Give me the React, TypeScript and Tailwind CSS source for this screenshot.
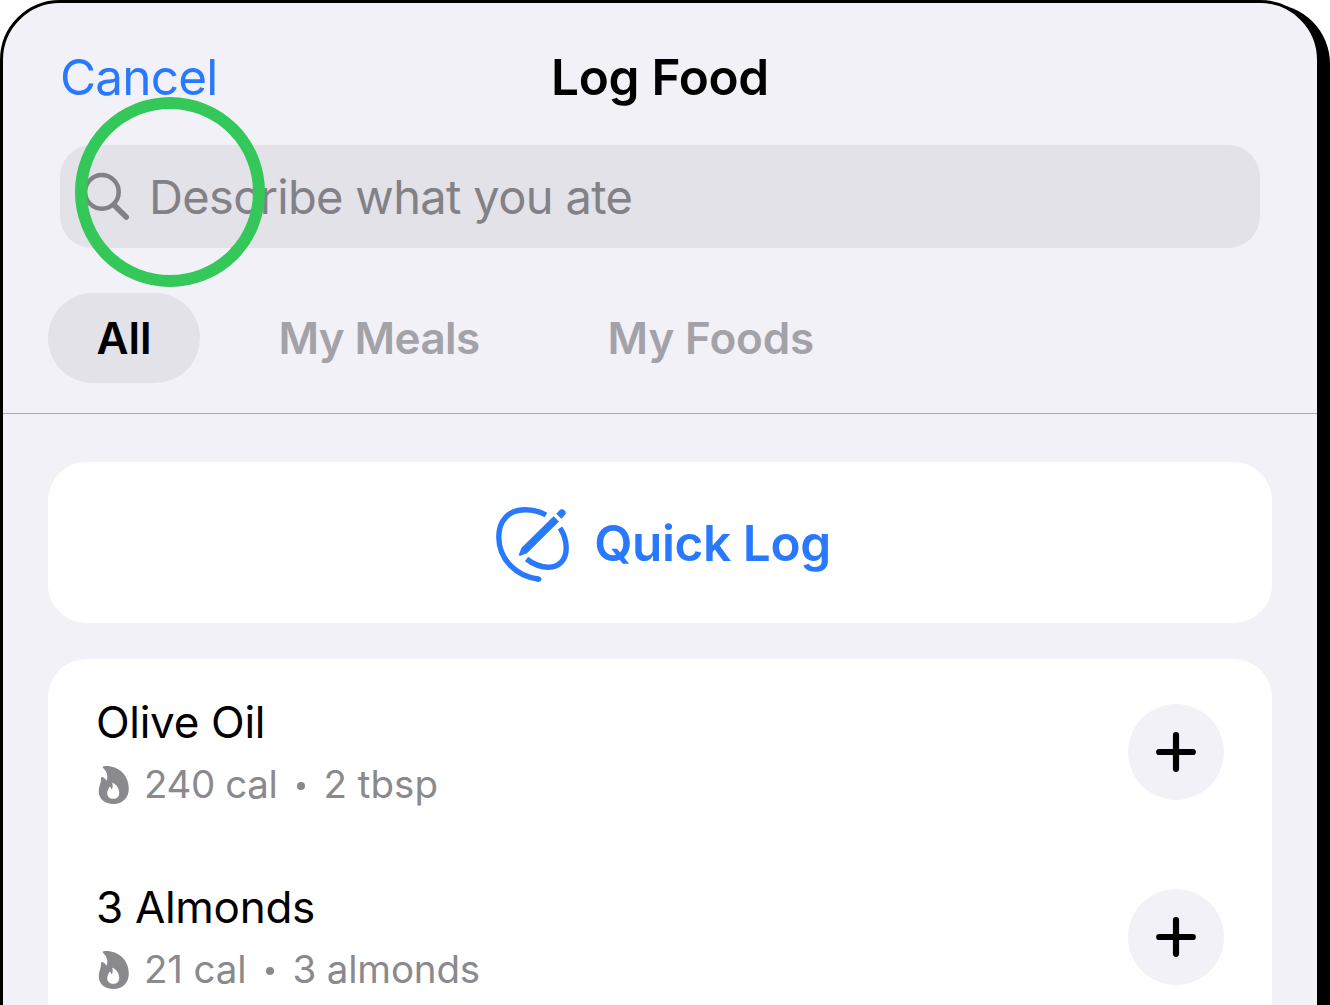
import type { ReactNode } from "react";

const foods = [
  { name: "Olive Oil", nameTracking: "tracking-[-0.3px]", cal: "240 cal", calTracking: "tracking-[-0.4px]", amount: "2 tbsp", amountTracking: "tracking-[0.05px]" },
  { name: "3 Almonds", nameTracking: "tracking-[-0.3px]", cal: "21 cal", calTracking: "tracking-[-0.15px]", amount: "3 almonds", amountTracking: "tracking-[-0.15px]" },
];

function SearchIcon() {
  return (
    <svg className="block h-[50px] w-[50px] shrink-0" viewBox="0 0 50 50" fill="none" stroke="#828187" strokeLinecap="round">
      <circle cx="19.9" cy="19.9" r="16.8" strokeWidth="4.5" />
      <path d="M32 33 L44.2 45" strokeWidth="5.6" />
    </svg>
  );
}

function QuickLogIcon() {
  return (
    <svg className="block h-[84px] w-[82px] shrink-0" viewBox="0 0 82 84" fill="none" stroke="#2979ff" strokeWidth="5.4">
      <path d="M54 13 C47 9 40 7.8 33 7.8 C17 7.8 6.8 18 6.8 35 C6.8 57 24 74.5 47 77.2" />
      <path d="M46 77 L46.9 77.2" strokeLinecap="round" strokeWidth="5.2" />
      <path d="M68 26 C72 32 74.2 39 74.2 46 C74.2 58 67 65.2 56.5 65.2 C48.5 65.2 41 62 34.5 57" />
      <g fill="#2979ff" stroke="none">
        <path d="M61.6 14.2 L67 19.4 L35 51.3 L28.4 53.8 Q26.4 54 27 52.2 L29.5 45.8 Z" />
        <path d="M64.2 11.8 L66.6 9.2 C68 6.8 71 6.6 72.5 8.3 C74.4 9.9 74.2 12.4 72 14 L69.4 16.8 Z" />
      </g>
    </svg>
  );
}

function FlameIcon() {
  return (
    <svg className="ml-[-2px] mt-[2px] block h-[46px] w-[40px] shrink-0" viewBox="0 0 40 46" fill="#8a898e">
      <path
        fillRule="evenodd"
        d="M9.7 4.2 C23 3 34.8 12 34.8 26.5 C34.8 36 28.5 42 19.5 42 C10.5 42 4.8 37 4.8 29.5 C4.8 24 7.2 21.5 7 16.5 C7 15 8 14.7 9 15.3 C10.6 16.2 11.7 17.3 12.6 18.8 C14.3 15 13.2 9.8 9.6 6.6 C8.3 5.4 8.5 4.3 9.7 4.2 Z M18.4 21.6 C18 20.9 18.5 20.5 19.2 21 C22.7 22.9 25.2 26.4 25.2 31 C25.2 34.6 22.9 36.8 19.4 36.8 C15.7 36.8 13.2 34.6 13.2 31.2 C13.2 28.8 14.5 27.4 15.2 25.3 C15.5 24.5 16 24.5 16.4 25.1 L17.8 27.6 C18.7 26 19 23.7 18.4 21.6 Z"
      />
    </svg>
  );
}

function PlusIcon() {
  return (
    <svg className="block h-[40px] w-[40px]" viewBox="0 0 40 40" stroke="#000" strokeWidth="6.2" strokeLinecap="round">
      <path d="M20 3.2 V36.8 M3.2 20 H36.8" />
    </svg>
  );
}

function Tab({ children, active = false }: { children: ReactNode; active?: boolean }) {
  return (
    <button className={active ? "h-[90px] w-[152px] rounded-[45px] bg-[#e3e2e8] text-black" : "h-[90px] text-[#a3a2a8]"}>{children}</button>
  );
}

export default function App() {
  return (
    <div className="h-[1005px] w-[1330px] overflow-hidden bg-white font-['Inter',sans-serif] text-black">
      <div className="relative h-[1100px] w-[1320px] rounded-[60px] border-[3px] border-black bg-[#f2f1f8] shadow-[10px_4px_0_0_#000]">
        <header className="grid h-[142px] grid-cols-3 items-center px-[57px] pt-[6px] text-[49.5px] leading-[60px]">
          <button className="justify-self-start tracking-[-0.8px] text-[#2979ff]">Cancel</button>
          <h1 className="justify-self-center whitespace-nowrap font-semibold tracking-[-0.3px]">Log Food</h1>
        </header>
        <div className="mx-[57px] flex h-[103px] items-center rounded-[32px] bg-[#e3e2e8] pl-[22px] text-[47px] text-[#828187]">
          <SearchIcon />
          <span className="ml-[17px] whitespace-nowrap pt-[2px] tracking-[-0.65px]">Describe what you ate</span>
        </div>
        <nav className="mt-[45px] flex h-[121px] items-start border-b border-[#ababaf] pl-[45px] text-[44px] font-semibold">
          <Tab active>All</Tab>
          <span className="w-[78.5px]" />
          <Tab>
            <span className="tracking-[-0.6px]">My Meals</span>
          </Tab>
          <span className="w-[128px]" />
          <Tab>
            <span className="tracking-[-0.15px]">My Foods</span>
          </Tab>
        </nav>
        <main className="px-[45px] pt-[48px]">
          <button className="flex h-[161px] w-full items-center justify-center rounded-[38px] bg-white pl-[3px] pt-[3px] text-[49.5px] font-semibold text-[#2979ff]">
            <QuickLogIcon />
            <span className="mb-[2px] ml-[20px] tracking-[-0.4px]">Quick Log</span>
          </button>
          <section className="mt-[36px] h-[500px] rounded-[38px] bg-white px-[48px]">
            {foods.map((f) => (
              <div key={f.name} className="flex h-[185px] items-center justify-between">
                <div className="pt-[2px]">
                  <h2 className={"text-[44px] leading-[62px] " + f.nameTracking}>{f.name}</h2>
                  <p className="flex h-[62px] items-center text-[38.5px] leading-[62px] text-[#8a898e]">
                    <FlameIcon />
                    <span className={"ml-[10px] " + f.calTracking}>{f.cal}</span>
                    <span className="ml-[20px] mr-[18px] mt-[5px] h-[8px] w-[8px] rounded-full bg-[#8a898e]" />
                    <span className={f.amountTracking}>{f.amount}</span>
                  </p>
                </div>
                <button className="grid h-[96px] w-[96px] place-items-center rounded-full bg-[#f2f1f8]">
                  <PlusIcon />
                </button>
              </div>
            ))}
          </section>
        </main>
        <div className="absolute left-[72px] top-[94px] h-[190px] w-[190px] rounded-full border-[12px] border-[#34c759]" />
      </div>
    </div>
  );
}
